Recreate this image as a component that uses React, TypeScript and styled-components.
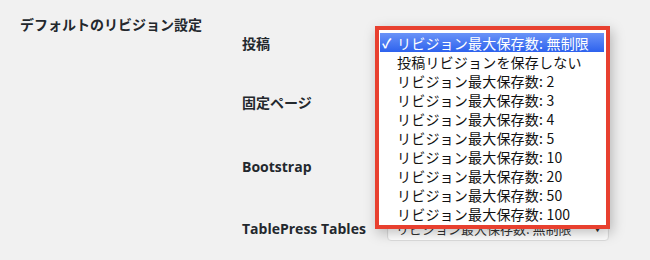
import React from "react";
import styled, { createGlobalStyle } from "styled-components";

const Global = createGlobalStyle`
  html, body { margin: 0; padding: 0; background: #f1f1f1; }
  body { width: 650px; height: 260px; overflow: hidden; font-family: "Open Sans", "Noto Sans CJK JP", sans-serif; }
`;

const Page = styled.div`
  display: flex;
  padding: 16px 0 0 20px;
  height: 260px;
  box-sizing: border-box;
`;

const Heading = styled.div`
  width: 222px;
  font-size: 14px;
  font-weight: 700;
  color: #23282d;
  line-height: 17px;
  font-family: "Noto Sans CJK JP", sans-serif;
`;

const Rows = styled.div`
  display: flex;
  flex-direction: column;
`;

const Row = styled.div<{ $top: number }>`
  display: grid;
  grid-template-columns: 145px 222px;
  align-items: center;
  margin-top: ${(p) => p.$top}px;
  height: 26px;
`;

const Label = styled.div`
  font-size: 14px;
  font-weight: 700;
  color: #23282d;
  font-family: "Open Sans", "Noto Sans CJK JP", sans-serif;
`;

const Cell = styled.div`
  position: relative;
  height: 26px;
`;

const Select = styled.div`
  box-sizing: border-box;
  height: 26px;
  border: 1px solid #ddd;
  border-radius: 4px;
  background: #fff;
  box-shadow: inset 0 1px 2px rgba(0, 0, 0, 0.07);
  display: flex;
  align-items: center;
  justify-content: space-between;
  padding: 0 6px 0 8px;
  font-size: 13px;
  color: #333;
  font-family: "Noto Sans CJK JP", sans-serif;
`;

const Arrow = styled.span`
  font-size: 9px;
  color: #333;
`;

const Popup = styled.div`
  position: absolute;
  left: -12px;
  top: -4px;
  width: 235px;
  height: 203px;
  box-sizing: border-box;
  border: 4px solid #e8402f;
  background: #fff;
  padding: 3px 2px 3px 1px;
  box-shadow: 2px 4px 12px rgba(0, 0, 0, 0.25);
  z-index: 2;
`;

const Option = styled.div<{ $selected?: boolean }>`
  height: 19px;
  display: flex;
  align-items: center;
  padding-left: 17px;
  position: relative;
  font-size: 14px;
  font-family: "Noto Sans CJK JP", sans-serif;
  color: ${(p) => (p.$selected ? "#fff" : "#111")};
  background: ${(p) => (p.$selected ? "linear-gradient(#6a93f7, #2d62ee)" : "transparent")};
  letter-spacing: 0.2px;
  white-space: nowrap;
`;

const Check = styled.span`
  position: absolute;
  left: 2px;
  font-weight: 700;
  font-size: 13px;
`;

const options = [
  "リビジョン最大保存数: 無制限",
  "投稿リビジョンを保存しない",
  "リビジョン最大保存数: 2",
  "リビジョン最大保存数: 3",
  "リビジョン最大保存数: 4",
  "リビジョン最大保存数: 5",
  "リビジョン最大保存数: 10",
  "リビジョン最大保存数: 20",
  "リビジョン最大保存数: 50",
  "リビジョン最大保存数: 100",
];

const rows = [
  { label: "投稿", top: 14 },
  { label: "固定ページ", top: 33 },
  { label: "Bootstrap", top: 38 },
  { label: "TablePress Tables", top: 36 },
];

export default function App() {
  return (
    <>
      <Global />
      <Page>
        <Heading>デフォルトのリビジョン設定</Heading>
        <Rows>
          {rows.map((r, i) => (
            <Row key={r.label} $top={r.top}>
              <Label>{r.label}</Label>
              <Cell>
                <Select>
                  <span>リビジョン最大保存数: 無制限</span>
                  <Arrow>▼</Arrow>
                </Select>
                {i === 0 && (
                  <Popup>
                    {options.map((o, j) => (
                      <Option key={o} $selected={j === 0}>
                        {j === 0 && <Check>✓</Check>}
                        {o}
                      </Option>
                    ))}
                  </Popup>
                )}
              </Cell>
            </Row>
          ))}
        </Rows>
      </Page>
    </>
  );
}
